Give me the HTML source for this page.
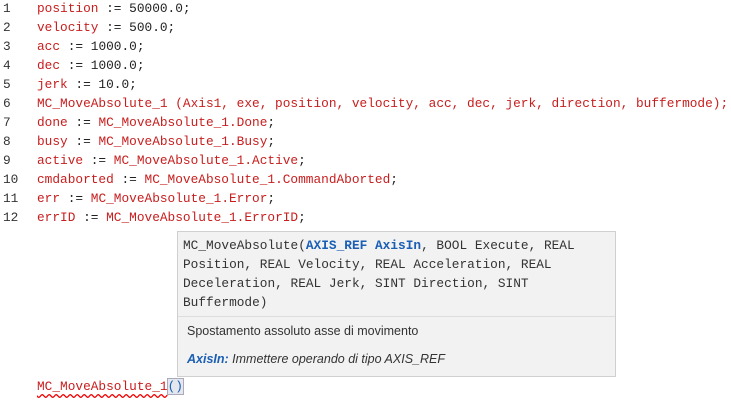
<!DOCTYPE html>
<html><head><style>
body{margin:0;width:731px;height:403px;background:#fff;overflow:hidden;position:relative;font-family:"Liberation Mono",monospace;font-size:12.8px;}
.ln{position:absolute;left:3px;color:#333;}
.cd{position:absolute;left:37px;color:#222;white-space:pre;}
.r{color:#c81e1e;}
.tip{position:absolute;left:177px;top:231px;width:439px;height:146px;background:#f2f2f2;border:1px solid #cfcfcf;box-sizing:border-box;}
.sig{position:absolute;left:5px;top:4px;line-height:19px;color:#333;white-space:pre;}
.b{color:#1a5fb4;font-weight:bold;}
.sep{position:absolute;left:0;right:0;top:84px;border-top:1px solid #ddd;}
.d{position:absolute;left:9px;font-family:"Liberation Sans",sans-serif;font-size:12.5px;color:#333;}
</style></head><body>
<div class="ln" style="top:1px">1</div><div class="cd" style="top:1px"><span class="r">position</span> := 50000.0;</div>
<div class="ln" style="top:20px">2</div><div class="cd" style="top:20px"><span class="r">velocity</span> := 500.0;</div>
<div class="ln" style="top:39px">3</div><div class="cd" style="top:39px"><span class="r">acc</span> := 1000.0;</div>
<div class="ln" style="top:58px">4</div><div class="cd" style="top:58px"><span class="r">dec</span> := 1000.0;</div>
<div class="ln" style="top:77px">5</div><div class="cd" style="top:77px"><span class="r">jerk</span> := 10.0;</div>
<div class="ln" style="top:96px">6</div><div class="cd r" style="top:96px">MC_MoveAbsolute_1 (Axis1, exe, position, velocity, acc, dec, jerk, direction, buffermode);</div>
<div class="ln" style="top:115px">7</div><div class="cd" style="top:115px"><span class="r">done</span> := <span class="r">MC_MoveAbsolute_1.Done</span>;</div>
<div class="ln" style="top:134px">8</div><div class="cd" style="top:134px"><span class="r">busy</span> := <span class="r">MC_MoveAbsolute_1.Busy</span>;</div>
<div class="ln" style="top:153px">9</div><div class="cd" style="top:153px"><span class="r">active</span> := <span class="r">MC_MoveAbsolute_1.Active</span>;</div>
<div class="ln" style="top:172px">10</div><div class="cd" style="top:172px"><span class="r">cmdaborted</span> := <span class="r">MC_MoveAbsolute_1.CommandAborted</span>;</div>
<div class="ln" style="top:191px">11</div><div class="cd" style="top:191px"><span class="r">err</span> := <span class="r">MC_MoveAbsolute_1.Error</span>;</div>
<div class="ln" style="top:210px">12</div><div class="cd" style="top:210px"><span class="r">errID</span> := <span class="r">MC_MoveAbsolute_1.ErrorID</span>;</div>
<div class="tip">
<div class="sig">MC_MoveAbsolute(<span class="b">AXIS_REF AxisIn</span>, BOOL Execute, REAL
Position, REAL Velocity, REAL Acceleration, REAL
Deceleration, REAL Jerk, SINT Direction, SINT
Buffermode)</div>
<div class="sep"></div>
<div class="d" style="top:92px">Spostamento assoluto asse di movimento</div>
<div class="d" style="top:120px;font-style:italic"><b style="color:#1a5fb4">AxisIn:</b> Immettere operando di tipo AXIS_REF</div>
</div>
<div class="cd" style="top:379px"><span class="r" style="text-decoration:underline wavy #e00;text-underline-offset:3px">MC_MoveAbsolute_1</span><span style="color:#1a5fb4;background:#e4e8ee;outline:1px solid #aab">()</span></div>
</body></html>
